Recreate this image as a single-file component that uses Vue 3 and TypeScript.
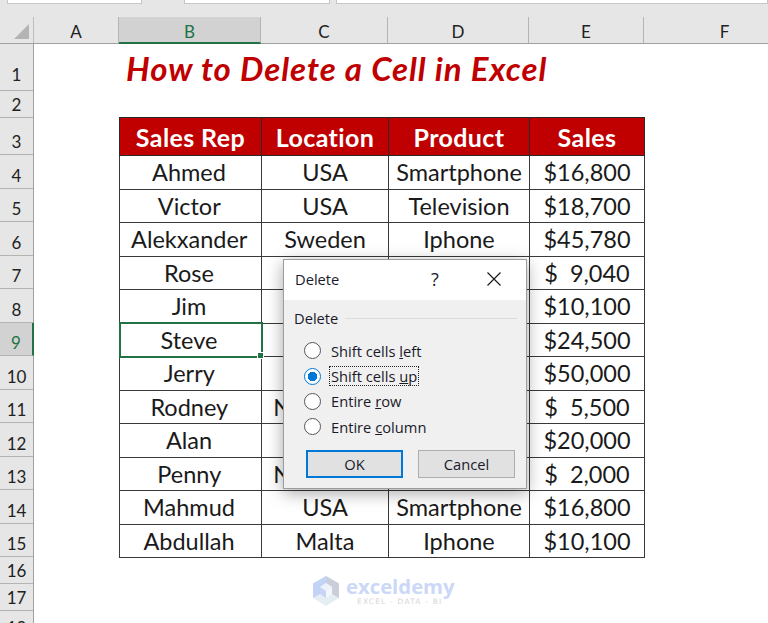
<script setup lang="ts">
interface SalesRow {
  rep: string
  location: string
  product: string
  sales: string
}

const columns = [
  { name: 'A', width: 85 },
  { name: 'B', width: 142 },
  { name: 'C', width: 127 },
  { name: 'D', width: 141 },
  { name: 'E', width: 115 },
  { name: 'F', width: 162 },
]

const rowHeights = [46.5, 27, 37.5, 33.5, 33.5, 33.5, 33.5, 33.5, 33.5, 33.5, 33.5, 33.5, 33.5, 33.5, 33.5, 26.5, 27, 30]

// cells under the dialog stay empty, only the start of the two long locations shows
const rows: SalesRow[] = [
  { rep: 'Ahmed', location: 'USA', product: 'Smartphone', sales: '$16,800' },
  { rep: 'Victor', location: 'USA', product: 'Television', sales: '$18,700' },
  { rep: 'Alekxander', location: 'Sweden', product: 'Iphone', sales: '$45,780' },
  { rep: 'Rose', location: '', product: '', sales: '$  9,040' },
  { rep: 'Jim', location: '', product: '', sales: '$10,100' },
  { rep: 'Steve', location: '', product: '', sales: '$24,500' },
  { rep: 'Jerry', location: '', product: '', sales: '$50,000' },
  { rep: 'Rodney', location: 'Nicaragua', product: '', sales: '$  5,500' },
  { rep: 'Alan', location: '', product: '', sales: '$20,000' },
  { rep: 'Penny', location: 'Nicaragua', product: '', sales: '$  2,000' },
  { rep: 'Mahmud', location: 'USA', product: 'Smartphone', sales: '$16,800' },
  { rep: 'Abdullah', location: 'Malta', product: 'Iphone', sales: '$10,100' },
]
</script>

<template>
  <div class="window">
    <div class="formula-bar">
      <div class="box name-box"></div>
      <div class="box fx-box"></div>
      <div class="box input-box"></div>
    </div>

    <div class="col-headers">
      <div class="corner"><span class="triangle"></span></div>
      <div
        v-for="col in columns"
        :key="col.name"
        class="col-head"
        :class="{ active: col.name === 'B' }"
        :style="{ width: col.width + 'px' }"
      >
        {{ col.name }}
      </div>
    </div>

    <div class="sheet">
      <div class="row-headers">
        <div
          v-for="(h, i) in rowHeights"
          :key="i"
          class="row-head"
          :class="{ active: i === 8 }"
          :style="{ height: h + 'px' }"
        >
          {{ i + 1 }}
        </div>
      </div>

      <div class="cells">
        <h1 class="title">How to Delete a Cell in Excel</h1>
        <table class="sales">
          <thead>
            <tr>
              <th class="c-rep">Sales Rep</th>
              <th class="c-loc">Location</th>
              <th class="c-prod">Product</th>
              <th class="c-sales">Sales</th>
            </tr>
          </thead>
          <tbody>
            <tr v-for="row in rows" :key="row.rep">
              <td class="rep" :class="{ selected: row.rep === 'Steve' }">
                {{ row.rep }}
                <span v-if="row.rep === 'Steve'" class="handle"></span>
              </td>
              <td>{{ row.location }}</td>
              <td>{{ row.product }}</td>
              <td class="money">{{ row.sales }}</td>
            </tr>
          </tbody>
        </table>
      </div>
    </div>

    <div class="watermark">
      <svg width="29" height="32" viewBox="0 0 29 32">
        <path d="M14 1 L1 8.5 V23 L14 31 L27 23 V8.5 Z" fill="#e4eef3" />
        <path d="M14 1 L1 8.5 V23 L8 19 V12 L14 8 Z" fill="#c3d3f8" />
        <path d="M14 1 L27 8.5 V23 L20 19 V12 L14 8 Z" fill="#c9ced8" />
        <path d="M14 16 L8 12 L14 8 L20 12 Z" fill="#eef2fb" />
        <path d="M14 16 V23 L8 19 V12 Z" fill="#c8d6f6" />
        <path d="M14 16 V23 L20 19 V12 Z" fill="#f3f6fb" />
      </svg>
      <div class="wm-text">
        <div class="wm-name">exceldemy</div>
        <div class="wm-sub">EXCEL - DATA - BI</div>
      </div>
    </div>

    <div class="dialog">
      <div class="dialog-title">
        <span class="dialog-name">Delete</span>
        <span class="help">?</span>
        <svg class="close" width="16" height="16" viewBox="0 0 16 16">
          <path d="M1.5 1.5 L14.5 14.5 M14.5 1.5 L1.5 14.5" stroke="#1a1a1a" stroke-width="1.2" fill="none" />
        </svg>
      </div>
      <div class="dialog-body">
        <div class="group-label"><span>Delete</span><i class="rule"></i></div>
        <div class="options">
          <div class="option"><span class="radio"></span><span class="opt-text">Shift cells <u>l</u>eft</span></div>
          <div class="option"><span class="radio on"></span><span class="opt-text focus">Shift cells <u>u</u>p</span></div>
          <div class="option"><span class="radio"></span><span class="opt-text">Entire <u>r</u>ow</span></div>
          <div class="option"><span class="radio"></span><span class="opt-text">Entire <u>c</u>olumn</span></div>
        </div>
        <div class="buttons">
          <button class="btn primary">OK</button>
          <button class="btn">Cancel</button>
        </div>
      </div>
    </div>
  </div>
</template>

<style scoped>
.window {
  position: relative;
  width: 768px;
  height: 623px;
  overflow: hidden;
  background: #fff;
  font-family: "Lato", "Liberation Sans", sans-serif;
}

.formula-bar {
  display: flex;
  height: 17px;
  background: #e6e6e6;
  padding-left: 7px;
  gap: 6px;
  box-sizing: border-box;
}

.box {
  height: 4px;
  box-sizing: border-box;
  background: #fff;
  border: 1px solid #c6c6c6;
  border-top: none;
}

.name-box {
  width: 135px;
  margin-right: 36px;
}

.fx-box {
  width: 146px;
}

.input-box {
  flex: 1;
}

.col-headers {
  display: flex;
  height: 27px;
  background: #e6e6e6;
  border-bottom: 1px solid #a0a0a0;
  box-sizing: border-box;
  font-size: 17px;
  color: #222;
}

.corner {
  width: 34px;
  flex: none;
  border-right: 1px solid #bdbdbd;
  box-sizing: border-box;
  position: relative;
}

.triangle {
  position: absolute;
  right: 4px;
  bottom: 4px;
  width: 0;
  height: 0;
  border-left: 15px solid transparent;
  border-bottom: 15px solid #b4b4b4;
}

.col-head {
  flex: none;
  box-sizing: border-box;
  border-right: 1px solid #b4b4b4;
  display: flex;
  align-items: center;
  justify-content: center;
  padding-top: 3px;
}

.col-head.active {
  background: #d2d2d2;
  color: #217346;
  border-bottom: 2px solid #217346;
  margin-bottom: -1px;
}

.sheet {
  display: flex;
}

.row-headers {
  width: 34px;
  flex: none;
  background: #e6e6e6;
  border-right: 1px solid #a0a0a0;
  box-sizing: border-box;
  font-size: 17px;
  color: #222;
}

.row-head {
  box-sizing: border-box;
  border-bottom: 1px solid #b4b4b4;
  display: flex;
  align-items: flex-end;
  justify-content: center;
  padding-bottom: 2px;
}

.row-head:first-child {
  padding-bottom: 5px;
}

.row-head.active {
  background: #d2d2d2;
  color: #217346;
  border-right: 2px solid #217346;
  margin-right: -1px;
}

.cells {
  flex: 1;
  padding-left: 85px;
}

.title {
  margin: 0;
  height: 73px;
  padding: 4px 0 0 7px;
  box-sizing: border-box;
  font-size: 33px;
  letter-spacing: 0.95px;
  line-height: 40px;
  font-weight: 700;
  font-style: italic;
  color: #c00000;
  white-space: nowrap;
}

.sales {
  border-collapse: collapse;
  table-layout: fixed;
  width: 525px;
  font-size: 23.5px;
  color: #1a1a1a;
}

.c-rep {
  width: 142px;
}

.c-loc {
  width: 127px;
}

.c-prod {
  width: 141px;
}

.c-sales {
  width: 115px;
}

.sales th {
  height: 38px;
  padding: 0;
  background: #c00000;
  color: #fff;
  font-size: 25px;
  font-weight: 700;
  letter-spacing: 0.4px;
  border: 1.5px solid #2a2a2a;
  box-sizing: border-box;
}

.sales td {
  position: relative;
  height: 33.5px;
  padding: 0;
  text-align: center;
  border: 1.5px solid #3a3a3a;
  box-sizing: border-box;
  white-space: pre;
}

.sales td.rep {
  padding-left: 3px;
}

.sales td.selected {
  outline: 2px solid #217346;
  outline-offset: -1px;
}

.handle {
  position: absolute;
  right: -3px;
  bottom: -3px;
  width: 7px;
  height: 7px;
  background: #217346;
  border: 1px solid #fff;
  box-sizing: border-box;
  z-index: 1;
}

.watermark {
  position: absolute;
  left: 312px;
  top: 575px;
  display: flex;
  gap: 5px;
  align-items: flex-start;
}

.wm-text {
  padding-top: 1px;
}

.wm-name {
  font-family: "Open Sans", sans-serif;
  font-weight: 700;
  font-size: 20.3px;
  line-height: 21px;
  color: #cbd8f8;
}

.wm-sub {
  font-family: "DejaVu Sans", sans-serif;
  font-size: 7.5px;
  letter-spacing: 1.2px;
  line-height: 10px;
  color: #d6d6d6;
  padding-left: 11px;
  white-space: nowrap;
}

.dialog {
  position: absolute;
  left: 283px;
  top: 259px;
  width: 244px;
  height: 230px;
  box-sizing: border-box;
  border: 1px solid #9c9c9c;
  background: #f0f0f0;
  box-shadow: 0 4px 16px rgba(0, 0, 0, 0.35);
  font-family: "Open Sans", "Liberation Sans", sans-serif;
  font-size: 14.7px;
  color: #1a1a2a;
  z-index: 2;
}

.dialog-title {
  display: flex;
  align-items: center;
  height: 40px;
  background: #fff;
  padding: 0 0 2px 11px;
  box-sizing: border-box;
}

.dialog-name {
  flex: none;
  width: 132px;
}

.help {
  width: 16px;
  font-size: 18px;
  text-align: center;
}

.close {
  margin-left: 43px;
}

.dialog-body {
  padding: 9px 9px 0 10px;
}

.group-label {
  display: flex;
  align-items: center;
  gap: 7px;
  height: 18px;
}

.rule {
  flex: 1;
  height: 1px;
  background: #dcdcdc;
}

.options {
  display: flex;
  flex-direction: column;
  padding: 11px 0 0 10px;
}

.option {
  display: flex;
  align-items: center;
  gap: 9px;
  height: 25.4px;
}

.radio {
  width: 17px;
  height: 17px;
  flex: none;
  box-sizing: border-box;
  border: 1.5px solid #555;
  border-radius: 50%;
  background: #fff;
}

.radio.on {
  border-color: #0078d7;
  background: radial-gradient(circle, #0078d7 0 4.5px, #fff 5px);
}

.opt-text {
  padding: 0 1px;
  border: 1px dotted transparent;
  margin-left: -1px;
  line-height: 18px;
}

.opt-text.focus {
  border-color: #222;
}

.buttons {
  display: flex;
  gap: 15px;
  padding: 10px 0 0 12px;
}

.btn {
  width: 97px;
  height: 28px;
  padding: 0;
  box-sizing: border-box;
  border: 1px solid #adadad;
  background: #e1e1e1;
  font: inherit;
  color: inherit;
}

.btn.primary {
  border: 2px solid #0078d7;
}
</style>
